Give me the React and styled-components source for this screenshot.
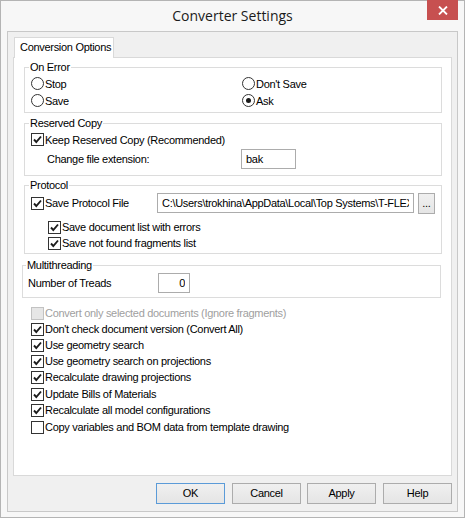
import React from "react";
import styled, { createGlobalStyle } from "styled-components";

const GlobalStyle = createGlobalStyle`
  html, body {
    margin: 0;
    padding: 0;
    background: #ffffff;
  }
  * {
    box-sizing: border-box;
  }
`;

const Window = styled.div`
  width: 465px;
  height: 518px;
  border: 1px solid #b4b4b4;
  background: #f7f7f7;
  display: flex;
  flex-direction: column;
  font-family: "Liberation Sans", Arial, sans-serif;
  font-size: 11px;
  letter-spacing: -0.3px;
  color: #000;
`;

const TitleBar = styled.div`
  height: 30px;
  display: grid;
  grid-template-columns: 1fr auto 1fr;
  align-items: start;
`;

const Title = styled.div`
  font-family: "Open Sans", "Noto Sans", sans-serif;
  font-size: 14px;
  letter-spacing: 0;
  line-height: 30px;
  color: #1b1b1b;
  grid-column: 2;
`;

const CloseButton = styled.div`
  grid-column: 3;
  justify-self: end;
  width: 31px;
  height: 20px;
  margin-right: 6px;
  margin-top: -1px;
  background: #c75050;
  display: flex;
  align-items: center;
  justify-content: center;
`;

const Client = styled.div`
  flex: 1;
  margin: 0 6px 5px 6px;
  border: 1px solid #c8c8c8;
  background: #f0f0f0;
  padding: 5px 5px 7px 5px;
  display: flex;
  flex-direction: column;
`;

const TabStrip = styled.div`
  display: flex;
  position: relative;
  z-index: 1;
`;

const Tab = styled.div`
  margin-left: 1px;
  width: 100px;
  height: 21px;
  margin-bottom: -1px;
  border: 1px solid #d9d9d9;
  border-bottom: none;
  background: #fff;
  padding-left: 5px;
  line-height: 19px;
  white-space: nowrap;
`;

const Panel = styled.div`
  flex: 1;
  border: 1px solid #d9d9d9;
  background: #fff;
  padding: 0 9px 0 10px;
  display: flex;
  flex-direction: column;
`;

const Group = styled.fieldset`
  margin: ${(p) => p.$top ?? 4}px ${(p) => p.$right ?? 0}px 0 ${(p) => p.$left ?? 0}px;
  padding: 1px 6px ${(p) => p.$bottom ?? 3}px ${(p) => p.$pad ?? 6}px;
  border: 1px solid #dcdcdc;
  min-width: 0;
`;

const Legend = styled.legend`
  margin-left: -2px;
  padding: 0 1px;
  line-height: 13px;
  font-size: 11px;
`;

const RadioGrid = styled.div`
  display: grid;
  grid-template-columns: 211px 1fr;
  grid-auto-rows: 17px;
`;

const Option = styled.label`
  display: flex;
  align-items: center;
  height: ${(p) => p.$h ?? 17}px;
  margin-left: ${(p) => p.$indent ?? 0}px;
  margin-top: ${(p) => p.$mt ?? 0}px;
  color: ${(p) => (p.$disabled ? "#a0a0a0" : "#000")};
  white-space: nowrap;
`;

const RadioCircle = styled.span`
  width: 13px;
  height: 13px;
  border-radius: 50%;
  border: 1px solid #333;
  background: #fff;
  margin-right: 1px;
  flex: none;
  display: flex;
  align-items: center;
  justify-content: center;
`;

const RadioDot = styled.span`
  width: 5px;
  height: 5px;
  border-radius: 50%;
  background: #1a1a1a;
`;

const Box = styled.span`
  width: 13px;
  height: 13px;
  border: 1px solid ${(p) => (p.$disabled ? "#c2c2c2" : "#333")};
  background: ${(p) => (p.$disabled ? "#e6e6e6" : "#fff")};
  margin-right: 1px;
  flex: none;
  display: flex;
  align-items: center;
  justify-content: center;
`;

const FieldRow = styled.div`
  display: flex;
  align-items: center;
  height: 20px;
  margin-top: ${(p) => p.$mt ?? 0}px;
  padding-left: ${(p) => p.$indent ?? 0}px;
`;

const FieldLabel = styled.div`
  width: ${(p) => p.$w}px;
  flex: none;
  white-space: nowrap;
`;

const TextBox = styled.input`
  height: 20px;
  width: ${(p) => (p.$w ? `${p.$w}px` : "auto")};
  flex: ${(p) => (p.$w ? "none" : "1")};
  min-width: 0;
  border: 1px solid #acacac;
  background: #fff;
  padding: 0 4px;
  font-family: "Liberation Sans", Arial, sans-serif;
  font-size: 11px;
  letter-spacing: -0.3px;
  color: #000;
  text-align: ${(p) => p.$align ?? "left"};
  outline: none;
`;

const Ellipsis = styled.div`
  width: 17px;
  height: 21px;
  margin-left: 4px;
  margin-top: 1px;
  border: 1px solid #acacac;
  background: linear-gradient(#f0f0f0, #e5e5e5);
  text-align: center;
  line-height: 19px;
  flex: none;
`;

const CheckList = styled.div`
  margin: 7px 0 0 7px;
  display: flex;
  flex-direction: column;
`;

const ButtonRow = styled.div`
  margin-top: 7px;
  display: flex;
  justify-content: flex-end;
  gap: 7px;
`;

const Button = styled.div`
  width: 69px;
  height: 21px;
  border: 1px solid ${(p) => (p.$default ? "#5b9bd8" : "#acacac")};
  background: linear-gradient(#f0f0f0, #e5e5e5);
  text-align: center;
  line-height: 19px;
  margin-left: ${(p) => p.$ml ?? 0}px;
`;

function Check({ checked, disabled }) {
  return (
    <Box $disabled={disabled}>
      {checked && (
        <svg width="11" height="11" viewBox="0 0 11 11">
          <path d="M2 5.5 L4.3 8 L9 2.5" fill="none" stroke="#1c1c1c" strokeWidth="1.9" />
        </svg>
      )}
    </Box>
  );
}

function CheckOption({ children, checked, disabled, indent, mt, h }) {
  return (
    <Option $disabled={disabled} $indent={indent} $mt={mt} $h={h}>
      <Check checked={checked} disabled={disabled} />
      {children}
    </Option>
  );
}

function Radio({ children, checked }) {
  return (
    <Option>
      <RadioCircle>{checked && <RadioDot />}</RadioCircle>
      {children}
    </Option>
  );
}

const options = [
  { text: "Convert only selected documents (Ignore fragments)", disabled: true },
  { text: "Don't check document version (Convert All)", checked: true },
  { text: "Use geometry search", checked: true },
  { text: "Use geometry search on projections", checked: true },
  { text: "Recalculate drawing projections", checked: true },
  { text: "Update Bills of Materials", checked: true, mt: 1 },
  { text: "Recalculate all model configurations", checked: true },
  { text: "Copy variables and BOM data from template drawing", mt: 1 },
];

export default function App() {
  return (
    <>
      <GlobalStyle />
      <Window>
        <TitleBar>
          <Title>Converter Settings</Title>
          <CloseButton>
            <svg width="10" height="9" viewBox="0 0 10 9">
              <path d="M1 0.5 L9 8.5 M9 0.5 L1 8.5" stroke="#fff" strokeWidth="1.8" />
            </svg>
          </CloseButton>
        </TitleBar>
        <Client>
          <TabStrip>
            <Tab>Conversion Options</Tab>
          </TabStrip>
          <Panel>
            <Group $top={3}>
              <Legend>On Error</Legend>
              <RadioGrid>
                <Radio>Stop</Radio>
                <Radio>Don't Save</Radio>
                <Radio>Save</Radio>
                <Radio checked>Ask</Radio>
              </RadioGrid>
            </Group>

            <Group $bottom={6}>
              <Legend>Reserved Copy</Legend>
              <CheckOption checked>Keep Reserved Copy (Recommended)</CheckOption>
              <FieldRow $mt={1} $indent={16}>
                <FieldLabel $w={194}>Change file extension:</FieldLabel>
                <TextBox $w={55} defaultValue="bak" />
              </FieldRow>
            </Group>

            <Group $top={3} $bottom={2}>
              <Legend>Protocol</Legend>
              <FieldRow>
                <FieldLabel $w={126}>
                  <CheckOption checked h={20}>Save Protocol File</CheckOption>
                </FieldLabel>
                <TextBox defaultValue="C:\Users\trokhina\AppData\Local\Top Systems\T-FLEX" />
                <Ellipsis>...</Ellipsis>
              </FieldRow>
              <CheckOption checked indent={17} mt={6} h={16}>
                Save document list with errors
              </CheckOption>
              <CheckOption checked indent={17} h={16}>
                Save not found fragments list
              </CheckOption>
            </Group>

            <Group $top={5} $left={-2} $right={1} $pad={5} $bottom={4}>
              <Legend>Multithreading</Legend>
              <FieldRow>
                <FieldLabel $w={130}>Number of Treads</FieldLabel>
                <TextBox $w={32} $align="right" defaultValue="0" />
              </FieldRow>
            </Group>

            <CheckList>
              {options.map((o) => (
                <CheckOption
                  key={o.text}
                  checked={o.checked}
                  disabled={o.disabled}
                  mt={o.mt}
                  h={16}
                >
                  {o.text}
                </CheckOption>
              ))}
            </CheckList>
          </Panel>
          <ButtonRow>
            <Button $default>OK</Button>
            <Button>Cancel</Button>
            <Button $ml={-1}>Apply</Button>
            <Button>Help</Button>
          </ButtonRow>
        </Client>
      </Window>
    </>
  );
}
